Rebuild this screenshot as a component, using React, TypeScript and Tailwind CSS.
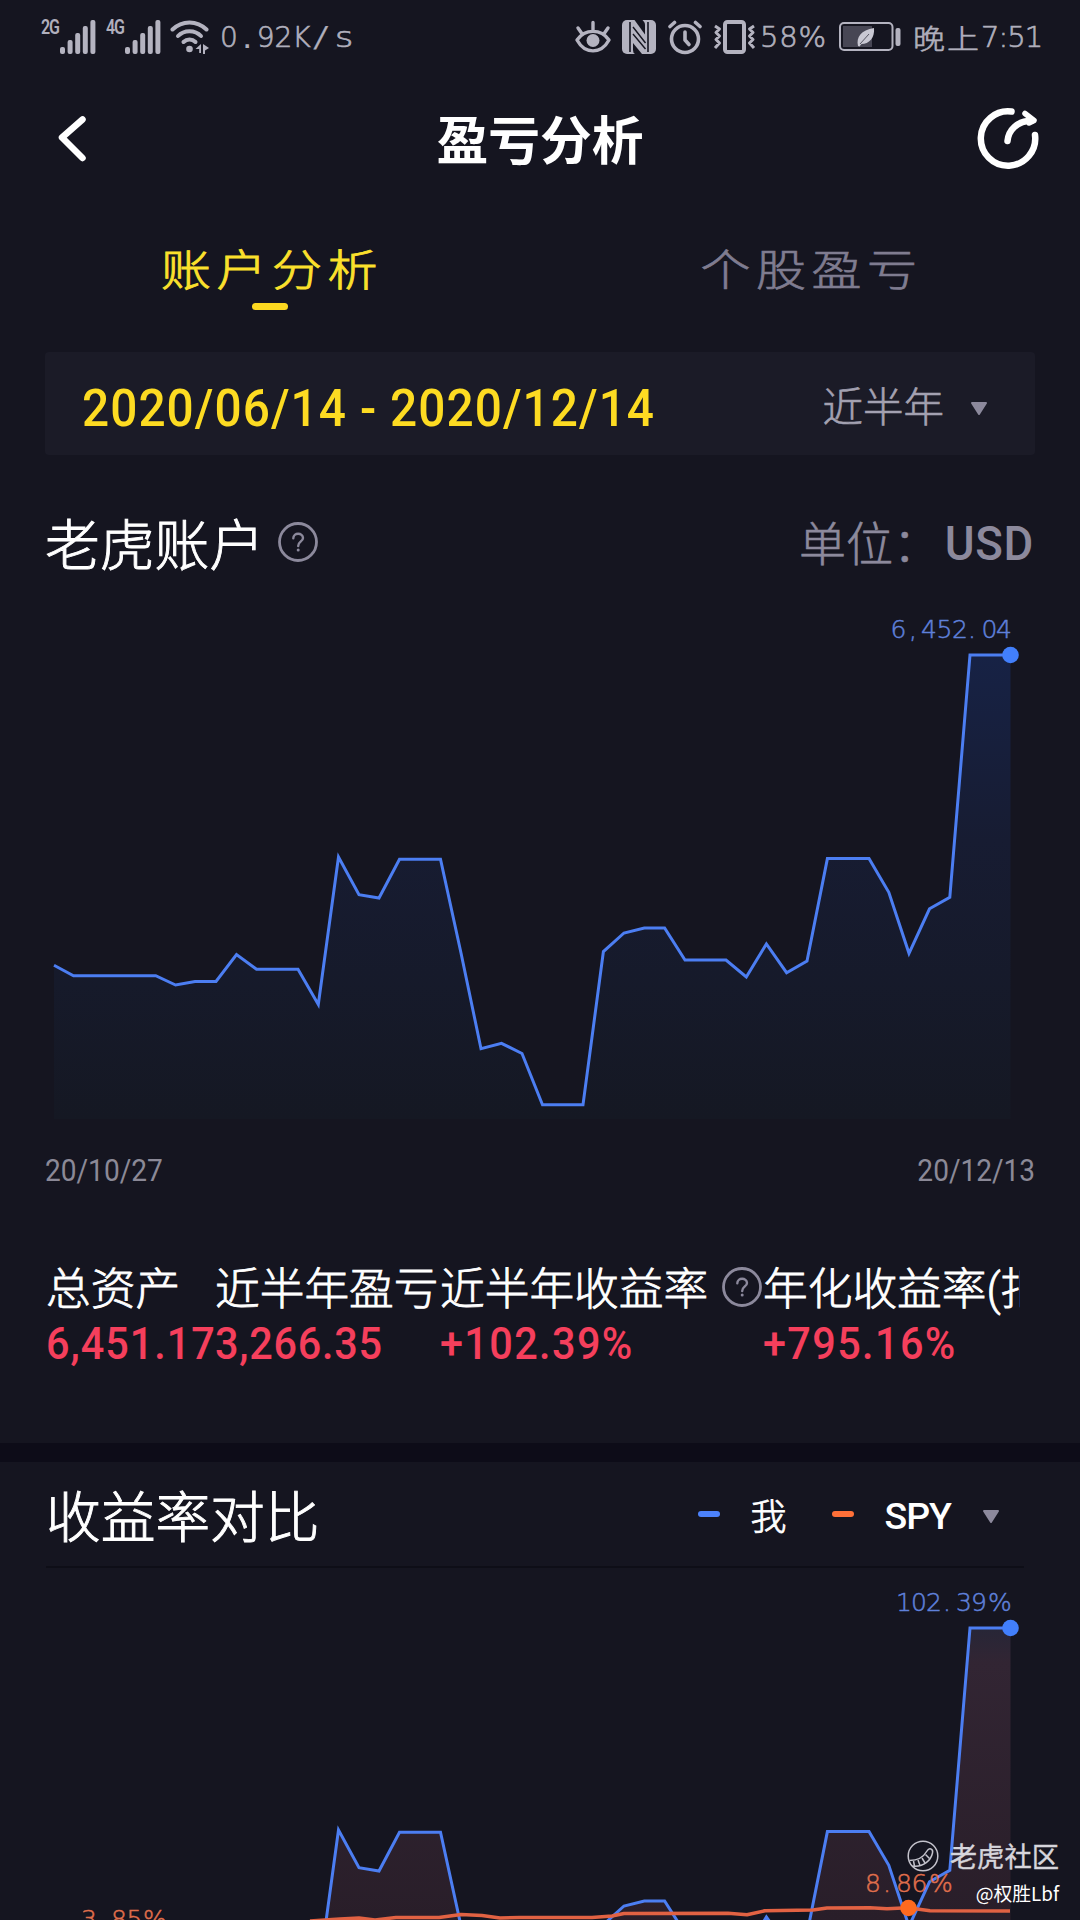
import React from "react";

const BALANCE: [number, number][] = [
  [54, 965.3], [73.5, 975.7], [155.7, 975.7], [175.6, 985], [195, 981.5], [216, 981.5], [236.5, 954.5],
  [256.5, 969.3], [298, 969.3], [318.3, 1004.5], [338.5, 857], [359, 894.7], [379, 898], [399.5, 859.3],
  [440.5, 859.3], [461, 953], [481, 1048.7], [501.5, 1043.3], [522, 1053.5], [542.5, 1104.7], [583, 1104.7],
  [603.4, 951.6], [624, 933], [644.3, 928], [664.6, 928], [685, 960], [726, 960], [746.3, 977],
  [766.4, 944], [786.6, 972.7], [807, 961], [827.4, 858.6], [869, 858.6], [888.8, 892.3], [909, 953.3],
  [929.5, 908.8], [949.8, 897.3], [970, 655], [1010.5, 655],
];

const SPY: [number, number][] = [
  [310, 1921], [340, 1919], [359, 1918], [375, 1920], [396, 1917.5], [439, 1917.5], [461, 1914.5], [482, 1915.5],
  [500, 1918], [520, 1917.5], [592, 1917.5], [612, 1916], [624, 1913.5], [728, 1913.3], [747, 1914.7],
  [765, 1910.7], [813, 1910], [827, 1908], [870, 1907.7], [887, 1908.7], [908, 1907.7], [930, 1910.7], [1010, 1911],
];

const toPoints = (pts: [number, number][], dy = 0) => pts.map(([x, y]) => `${x},${y + dy}`).join(" ");

function Signal() {
  return (
    <svg width="36" height="34" viewBox="0 0 36 34" fill="#b4b3c0">
      <rect x="0" y="27" width="5" height="7" rx="2" />
      <rect x="7.6" y="20" width="5" height="14" rx="2" />
      <rect x="15.2" y="13" width="5" height="21" rx="2" />
      <rect x="22.8" y="6" width="5" height="28" rx="2" />
      <rect x="30.4" y="0" width="5" height="34" rx="2" />
    </svg>
  );
}

function Wifi() {
  return (
    <svg width="40" height="34" viewBox="0 0 40 34" fill="none" stroke="#b4b3c0" strokeWidth="4" strokeLinecap="round">
      <path d="M2.5 9.500C12 0 27 0 36.500 9.500" />
      <path d="M8 16C14 9.500 25 9.500 31 16" />
      <path d="M13.500 22C17 18.500 22 18.500 25.500 22" />
      <circle cx="19.500" cy="29" r="3.300" fill="#b4b3c0" stroke="none" />
      <path d="M25.500 29l5.500-5v9h-1.800v-4zM33 24v10h2v-3.500l4-2.500z" fill="#b4b3c0" stroke="none" />
    </svg>
  );
}

function Eye() {
  return (
    <svg width="36" height="34" viewBox="0 0 36 34" fill="none" stroke="#b4b3c0" strokeWidth="3.400" strokeLinecap="round" strokeLinejoin="round">
      <path d="M2 20C10 8.500 26 8.500 34 20C26 34.500 10 34.500 2 20Z" />
      <circle cx="18" cy="20.500" r="6.500" fill="#b4b3c0" stroke="none" />
      <path d="M18 2.500v7M3 8l3.500 5M33 8l-3.500 5" />
    </svg>
  );
}

function Nfc() {
  return (
    <svg width="34" height="34" viewBox="0 0 34 34">
      <rect x="0" y="0" width="34" height="34" rx="5" fill="#b4b3c0" />
      <path d="M8 2V32M26 2V32" stroke="#151520" strokeWidth="1.600" />
      <path d="M12.500 0H20.500C22 1.500 23 3 23 5V14.500Z" fill="#151520" />
      <path d="M11 23L20 34H13Q11 33 11 30Z" fill="#151520" />
      <path d="M11 7L23.500 23M11 14L23.500 29" stroke="#151520" strokeWidth="1.400" />
    </svg>
  );
}

function Alarm() {
  return (
    <svg width="34" height="35" viewBox="0 0 34 35" fill="none" stroke="#b4b3c0" strokeWidth="3.600" strokeLinecap="round">
      <circle cx="17" cy="19" r="13.500" />
      <path d="M17 12v8l4 4.500" strokeLinejoin="round" />
      <path d="M2 6.500L6.500 2.500M32 6.500L27.500 2.500" />
    </svg>
  );
}

function Vibrate() {
  return (
    <svg width="43" height="34" viewBox="0 0 43 34" fill="none" stroke="#b4b3c0" strokeLinejoin="round">
      <rect x="12" y="2" width="19" height="30" rx="2.500" strokeWidth="4" />
      <path d="M2 6l4.500 3-3.500 3.500 3.500 3.500-3.500 3.500 3.500 3.500-4.500 5M41 6l-4.500 3 3.500 3.500-3.500 3.500 3.500 3.500-3.500 3.500 4.500 5" strokeWidth="3" />
    </svg>
  );
}

function Battery() {
  return (
    <svg width="62" height="30" viewBox="0 0 62 30">
      <rect x="1" y="1" width="52.500" height="27" rx="4" fill="none" stroke="#b4b3c0" strokeWidth="2" />
      <rect x="4" y="4" width="29" height="21" fill="#474654" />
      <path d="M19 24C17 15 22 8 35 6C36 16 30 22 22.500 22L20.500 24.500Z" fill="#c9c8d3" />
      <path d="M21 22L30 12" stroke="#575663" strokeWidth="1" />
      <rect x="56.500" y="6" width="5" height="18" rx="2" fill="#b4b3c0" />
    </svg>
  );
}

function Help() {
  return (
    <svg className="shrink-0" width="42" height="42" viewBox="0 0 42 42" fill="none" stroke="#8c899c" strokeLinecap="round">
      <circle cx="21" cy="21" r="18.500" strokeWidth="2.800" />
      <path d="M16.300 17.300C16.300 11.200 26 11.400 26 17C26 20.500 21.200 20.500 21.200 25" strokeWidth="2.400" />
      <circle cx="21.200" cy="29" r="1.500" fill="#8c899c" stroke="none" />
    </svg>
  );
}

function Caret() {
  return (
    <svg width="18" height="15" viewBox="0 0 18 15">
      <path d="M2 2H16L9 13Z" fill="#8c899c" stroke="#8c899c" strokeWidth="2" strokeLinejoin="round" />
    </svg>
  );
}

function StatusBar() {
  return (
    <div className="flex h-[74px] shrink-0 items-center pl-[41px] pr-[38px] text-[#b0afbc]">
      <span className="flex w-[19px] self-start pt-[17px] font-['Roboto'] text-[20px] font-semibold leading-none tracking-[-1.500px]">
        <span className="inline-block origin-left scale-x-[0.8]">2G</span>
      </span>
      <Signal />
      <span className="ml-[10px] flex w-[19px] self-start pt-[17px] font-['Roboto'] text-[20px] font-semibold leading-none tracking-[-1.500px]">
        <span className="inline-block origin-left scale-x-[0.8]">4G</span>
      </span>
      <Signal />
      <span className="ml-[9px]"><Wifi /></span>
      <span className="ml-[10px] flex pt-[2px] font-['DejaVu_Sans',sans-serif] text-[28px] font-extralight leading-none [-webkit-text-stroke:0.7px]">
        <span>0</span>
        <span className="px-[5px] [-webkit-text-stroke:2px]">.</span>
        <span>92K</span>
        <span className="inline-block scale-x-[1.700] px-[5px] [-webkit-text-stroke:0.2px]">/</span>
        <span className="inline-block origin-left scale-x-[1.250] pl-[4px]">s</span>
      </span>
      <div className="ml-auto flex items-center">
        <Eye />
        <span className="ml-[11px]"><Nfc /></span>
        <span className="ml-[12px]"><Alarm /></span>
        <span className="ml-[11px]"><Vibrate /></span>
        <span className="ml-[4px] w-[79px] pt-[1px] font-['DejaVu_Sans',sans-serif] text-[29px] font-extralight leading-none tracking-[0.800px] [-webkit-text-stroke:0.7px]">58%</span>
        <Battery />
        <span className="ml-[12px] flex w-[129px] items-center whitespace-nowrap font-['Noto_Sans_CJK_SC',sans-serif] text-[32px] font-light leading-none [-webkit-text-stroke:0.7px]">
          <span className="inline-block scale-y-[0.850] tracking-[2px]">晚上</span>
          <span className="font-['DejaVu_Sans',sans-serif] text-[29px] font-extralight tracking-[-1px]">7:51</span>
        </span>
      </div>
    </div>
  );
}

function Header() {
  return (
    <div className="grid h-[132px] shrink-0 grid-cols-[1fr_auto_1fr] items-center pl-[54px] pr-[40px]">
      <svg width="66" height="60" viewBox="0 0 66 60" fill="none" stroke="#fff" strokeWidth="6.500" strokeLinecap="round" strokeLinejoin="round">
        <path d="M28.500 9.500L8 27.500L28.500 48" />
      </svg>
      <h1 className="relative -left-[7px] pb-[4px] font-['Noto_Sans_CJK_SC',sans-serif] text-[51.800px] font-bold leading-none text-white">盈亏分析</h1>
      <svg className="mb-[4px] justify-self-end" width="66" height="64" viewBox="0 0 66 64" fill="none" stroke="#fff" strokeWidth="6.500" strokeLinecap="round" strokeLinejoin="round">
        <path d="M37.500 5.500A27.200 27.200 0 1 0 61 29" />
        <path d="M33.500 35C34.500 24 43 15 58 14.500" />
        <path d="M51 7.500L60 14.500L55 17" strokeWidth="5.500" />
      </svg>
    </div>
  );
}

function Tabs() {
  return (
    <div className="grid h-[146px] shrink-0 grid-cols-2 font-['Noto_Sans_CJK_SC',sans-serif] text-[50px] font-light leading-none tracking-[5.500px]">
      <div className="flex flex-col items-center pt-[36px] text-[#fbe02c]">
        <span className="scale-y-[0.870] pl-[4px] [-webkit-text-stroke:1px]">账户分析</span>
        <span className="mt-[11px] h-[7px] w-9 rounded-full bg-[#fcd820]" />
      </div>
      <div className="flex flex-col items-center pt-[36px] text-[#7f7c90]">
        <span className="scale-y-[0.870] pl-[3px] [-webkit-text-stroke:0.8px]">个股盈亏</span>
      </div>
    </div>
  );
}

const STATS = [
  { label: "总资产", value: "6,451.17", help: false, width: "w-[169px]", tracking: "tracking-[1.050px]" },
  { label: "近半年盈亏", value: "3,266.35", help: false, width: "w-[225px]", tracking: "tracking-[0.800px]" },
  { label: "近半年收益率", value: "+102.39%", help: true, width: "w-[323px]", tracking: "tracking-[1.500px]" },
  { label: "年化收益率(扣", value: "+795.16%", help: false, width: "w-[257px] overflow-hidden", tracking: "tracking-[1.500px]" },
];

export default function App() {
  return (
    <div className="relative flex h-[1920px] w-[1080px] flex-col overflow-hidden bg-[#151520] font-['Roboto','Noto_Sans_CJK_SC',sans-serif]">
      <StatusBar />
      <Header />
      <Tabs />

      <div className="mx-[45px] flex h-[103px] shrink-0 items-center justify-between rounded-sm bg-[#1b1b27] pl-[37px] pr-[47px] pt-[10px]">
        <span className="inline-block origin-left scale-x-[0.910] whitespace-nowrap text-[52.500px] font-medium leading-none tracking-[1.150px] text-[#fddb22]">2020/06/14 - 2020/12/14</span>
        <span className="flex items-center gap-[26px] text-[40.500px] font-light leading-none text-[#a3a1b1]">
          <span className="[-webkit-text-stroke:0.6px]">近半年</span>
          <Caret />
        </span>
      </div>

      <div className="flex h-[145px] shrink-0 items-center justify-between pb-[1px] pl-[45px] pr-[46px]">
        <span className="flex items-center gap-[13px] pt-[30px] text-[54.800px] font-light leading-none text-white">
          <span className="pt-[8px] [-webkit-text-stroke:0.9px]">老虎账户</span>
          <span><Help /></span>
        </span>
        <span className="flex items-center whitespace-nowrap pt-[34px] text-[47px] font-light leading-none text-[#8c899c]">
          <span className="[-webkit-text-stroke:0.6px]">单位：</span>
          <span className="inline-block origin-right scale-x-[0.950] text-[48px] font-medium tracking-[0.700px]">USD</span>
        </span>
      </div>

      <svg className="shrink-0" width="1080" height="530" viewBox="0 600 1080 530">
        <defs>
          <linearGradient id="balance" x1="0" y1="655" x2="0" y2="1119" gradientUnits="userSpaceOnUse">
            <stop offset="0" stopColor="#172245" />
            <stop offset="0.400" stopColor="#171c32" />
            <stop offset="1" stopColor="#151823" />
          </linearGradient>
        </defs>
        <polygon points={`${toPoints(BALANCE)} 1010.5,1119 54,1119`} fill="url(#balance)" />
        <polyline points={toPoints(BALANCE)} fill="none" stroke="#4c7ef2" strokeWidth="3" />
        <circle cx="1010.500" cy="655" r="8.300" fill="#427ffb" />
        <text x="890.5 909 921 936.5 952 968 981.5 996" y="638" fill="#5f80da" stroke="#5f80da" strokeWidth="0.500" className="font-['DejaVu_Sans',sans-serif] text-[25px] font-extralight">6,452.04</text>
      </svg>

      <div className="flex h-[80px] shrink-0 items-center justify-between px-[45px] text-[31px] leading-none text-[#8b8997]">
        <span className="inline-block origin-left scale-x-[0.905]">20/10/27</span>
        <span className="inline-block origin-right scale-x-[0.905]">20/12/13</span>
      </div>

      <div className="flex h-[233px] shrink-0 pl-[46px] pt-[53px]">
        {STATS.map((s) => (
          <div key={s.label} className={`${s.width} shrink-0 whitespace-nowrap`}>
            <div className="flex h-[48px] items-center gap-[13px] text-[44.700px] font-light leading-none text-white">
              <span className="pt-[6px] [-webkit-text-stroke:0.8px]">{s.label}</span>
              {s.help && <Help />}
            </div>
            <div className={`${s.tracking} mt-[10px] inline-block origin-left scale-x-[0.920] text-[45px] font-medium leading-none text-[#f53f5c]`}>{s.value}</div>
          </div>
        ))}
      </div>

      <div className="h-[19px] shrink-0 bg-[#0d0c18]" />

      <div className="ml-[46px] mr-[56px] flex h-[106px] shrink-0 items-center justify-between border-b-2 border-[#0e0e17] pr-[24px] text-white">
        <span className="pt-[9px] text-[54.700px] font-light leading-none [-webkit-text-stroke:0.9px]">收益率对比</span>
        <span className="flex items-center leading-none">
          <span className="h-[6px] w-[22px] rounded-sm bg-[#4c82fb]" />
          <span className="ml-[30px] pt-[7px] text-[36px] font-light [-webkit-text-stroke:0.8px]">我</span>
          <span className="ml-[46px] h-[6px] w-[22px] rounded-sm bg-[#ff7038]" />
          <span className="ml-[30px] mr-[31px] pt-[5px] text-[37.500px] font-medium tracking-[-1px]">SPY</span>
          <span className="pt-[5px]"><Caret /></span>
        </span>
      </div>

      <svg className="shrink-0" width="1080" height="352" viewBox="0 1568 1080 352">
        <defs>
          <linearGradient id="returns" x1="0" y1="1628" x2="0" y2="1920" gradientUnits="userSpaceOnUse">
            <stop offset="0" stopColor="#272637" />
            <stop offset="0.120" stopColor="#322533" />
            <stop offset="1" stopColor="#291e29" />
          </linearGradient>
        </defs>
        <polygon points={`${toPoints(BALANCE, 973)} 1010.5,2092 54,2092`} fill="url(#returns)" />
        <polyline points={toPoints(BALANCE, 973)} fill="none" stroke="#4c7ef2" strokeWidth="3" />
        <polyline points={toPoints(SPY)} fill="none" stroke="#e26243" strokeWidth="3.500" strokeLinejoin="round" />
        <circle cx="1010.500" cy="1628" r="8.300" fill="#427ffb" />
        <circle cx="908.500" cy="1908" r="8.300" fill="#ff6a1f" />
        <g className="font-['DejaVu_Sans',sans-serif] text-[25px] font-extralight" strokeWidth="0.500">
          <text x="896 911 926 943 956 971 988" y="1611" fill="#5f80da" stroke="#5f80da">102.39%</text>
          <text x="865 883 896 911.5 929" y="1891.500" fill="#e06f4c" stroke="#e06f4c">8.86%</text>
          <text x="81 98 111 126.5 143" y="1928" fill="#e06f4c" stroke="#e06f4c">3.85%</text>
        </g>
      </svg>

      <div className="absolute right-[21px] top-[1840px] flex flex-col items-end font-['Noto_Sans_CJK_SC',sans-serif] leading-none">
        <div className="flex items-center gap-[11px] text-[27.300px] font-normal text-[#d6d5dc] [-webkit-text-stroke:0.4px]">
          <svg width="32" height="32" viewBox="0 0 32 32" fill="none" stroke="#c4c3cc" strokeWidth="1.500">
            <circle cx="16" cy="16" r="14.800" />
            <path d="M2.500 20.500C10 20.500 16 18 20 11C22 7.500 26.500 8.500 25.500 13C24 20 17 27.500 5.500 26" />
            <path d="M6.500 21l1 5M11 20l2 5.500M15 18l3 5M18.500 14.500l4 4" />
          </svg>
          <span>老虎社区</span>
        </div>
        <span className="mt-[12px] text-[18.800px] text-white">@权胜Lbf</span>
      </div>
    </div>
  );
}
